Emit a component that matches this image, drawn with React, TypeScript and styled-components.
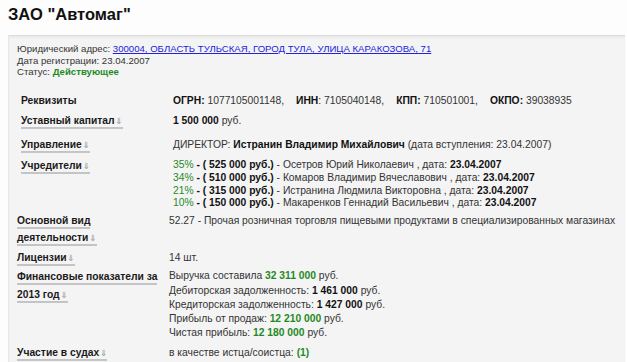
import React from 'react';
import styled, { createGlobalStyle } from 'styled-components';

const GlobalStyle = createGlobalStyle`
  html, body {
    margin: 0;
    padding: 0;
    background: #fdfdfd;
    font-family: "Liberation Sans", Arial, sans-serif;
    color: #333;
  }
`;

const Page = styled.div`
  width: 627px;
  height: 362px;
  overflow: hidden;
`;

const Title = styled.h1`
  margin: 0;
  padding: 5px 8px 0;
  height: 30px;
  font-size: 16.5px;
  line-height: 19px;
  font-weight: bold;
  color: #111;
`;

const Panel = styled.div`
  margin: 0 2px 0 8px;
  padding: 7px 0 20px 8px;
  background: #f4f4f4;
  border-top: 1px solid #dcdcdc;
  border-left: 1px solid #e6e6e6;
  box-shadow: inset 0 2px 2px rgba(0, 0, 0, 0.04);
  min-height: 340px;
`;

const Info = styled.div`
  font-size: 9.6px;
  line-height: 11.7px;
  color: #333;
`;

const Link = styled.a`
  color: #2222dd;
  text-decoration: underline;
`;

const Green = styled.span<{ $bold?: boolean }>`
  color: #1f8a1f;
  font-weight: ${({ $bold }) => ($bold ? 'bold' : 'normal')};
`;

const Strong = styled.b`
  color: #111;
`;

const Rows = styled.div<{ $shift?: number }>`
  margin-left: ${({ $shift }) => $shift ?? 0}px;
  padding-left: 4px;
`;

const Row = styled.div<{ $gap?: number }>`
  display: grid;
  grid-template-columns: 152px 1fr;
  margin-top: ${({ $gap }) => $gap ?? 3}px;
  font-size: 10.3px;
`;

const LabelCell = styled.div<{ $lh?: number }>`
  line-height: ${({ $lh }) => $lh ?? 17}px;
  font-weight: bold;
  color: #1a1a1a;
`;

const Label = styled.span`
  border-bottom: 2px solid #c4c4c4;
  padding-bottom: 1px;
`;

const Arrow = styled.span`
  color: #a8a8a8;
  font-size: 8.5px;
  font-weight: bold;
  font-family: "DejaVu Sans", sans-serif;
  margin-left: 1px;
`;

const Value = styled.div<{ $lh?: number; $pad?: number }>`
  line-height: ${({ $lh }) => $lh ?? 17}px;
  padding-top: ${({ $pad }) => $pad ?? 0}px;
  color: #333;
  white-space: nowrap;
`;

const Req = styled.span`
  margin-right: 12px;
`;

const Sep = styled.span`
  margin-left: 3px;
`;

const Tail = ({ text }: { text: string }) => (
  <Label>
    {text}
    <Arrow>⇓</Arrow>
  </Label>
);

const founders = [
  ['35%', '525 000', 'Осетров Юрий Николаевич'],
  ['34%', '510 000', 'Комаров Владимир Вячеславович'],
  ['21%', '315 000', 'Истранина Людмила Викторовна'],
  ['10%', '150 000', 'Макаренков Геннадий Васильевич'],
];

export default function App() {
  return (
    <Page>
      <GlobalStyle />
      <Title>ЗАО "Автомаг"</Title>
      <Panel>
        <Info>
          Юридический адрес: <Link href="#">300004, ОБЛАСТЬ ТУЛЬСКАЯ, ГОРОД ТУЛА, УЛИЦА КАРАКОЗОВА, 71</Link>
          <br />
          Дата регистрации: 23.04.2007
          <br />
          Статус: <Green $bold>Действующее</Green>
        </Info>

        <Rows>
          <Row $gap={14}>
            <LabelCell>Реквизиты</LabelCell>
            <Value>
              <Req><Strong>ОГРН:</Strong> 1077105001148,</Req>
              <Req><Strong>ИНН</Strong>: 7105040148,</Req>
              <Req><Strong>КПП:</Strong> 710501001,</Req>
              <Strong>ОКПО:</Strong> 39038935
            </Value>
          </Row>
          <Row>
            <LabelCell><Tail text="Уставный капитал" /></LabelCell>
            <Value><Strong>1 500 000</Strong> руб.</Value>
          </Row>
          <Row $gap={6}>
            <LabelCell><Tail text="Управление" /></LabelCell>
            <Value>
              ДИРЕКТОР: <Strong>Истранин Владимир Михайлович</Strong> (дата вступления: 23.04.2007)
            </Value>
          </Row>
          <Row $gap={3}>
            <LabelCell><Tail text="Учредители" /></LabelCell>
            <Value $lh={12.7} $pad={2}>
              {founders.map(([pct, sum, name]) => (
                <div key={name}>
                  <Green>{pct}</Green> <Strong>- ( {sum} руб.)</Strong> - {name} , дата: <Strong>23.04.2007</Strong>
                </div>
              ))}
            </Value>
          </Row>
        </Rows>

        <Rows $shift={-4}>
          <Row $gap={2}>
            <LabelCell>
              <Label>Основной вид</Label>
              <br />
              <Tail text="деятельности" />
            </LabelCell>
            <Value>
              52.27 - Прочая розничная торговля пищевыми продуктами в специализированных магазинах
            </Value>
          </Row>
          <Row $gap={2}>
            <LabelCell><Tail text="Лицензии" /></LabelCell>
            <Value>14 шт.</Value>
          </Row>
          <Row $gap={1}>
            <LabelCell $lh={18}>
              <Label>Финансовые показатели за</Label>
              <br />
              <Tail text="2013 год" />
            </LabelCell>
            <Value $lh={14.2} $pad={1.5}>
              Выручка составила <Green $bold>32 311 000</Green> руб.
              <br />
              Дебиторская задолженность: <Strong>1 461 000</Strong> руб.
              <br />
              Кредиторская задолженность: <Strong>1 427 000</Strong> руб.
              <br />
              Прибыль от продаж: <Green $bold>12 210 000</Green> руб.
              <br />
              Чистая прибыль: <Green $bold>12 180 000</Green> руб.
            </Value>
          </Row>
          <Row $gap={4}>
            <LabelCell><Tail text="Участие в судах" /></LabelCell>
            <Value>
              в качестве истца/соистца:<Sep /><Green $bold>(1)</Green>
            </Value>
          </Row>
        </Rows>
      </Panel>
    </Page>
  );
}
